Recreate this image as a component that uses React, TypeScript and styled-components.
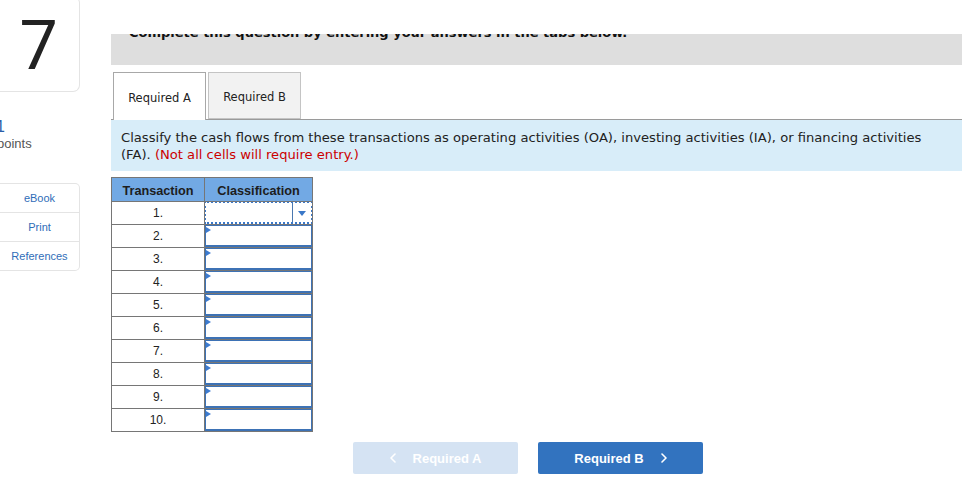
import React from "react";
import styled, { createGlobalStyle } from "styled-components";

const Global = createGlobalStyle`
  html, body { margin: 0; padding: 0; background: #fff; }
  body { font-family: "Liberation Sans", Arial, sans-serif; color: #222; overflow: hidden; }
`;

const Page = styled.div`
  display: flex;
  align-items: flex-start;
  width: 976px;
  height: 490px;
  overflow: hidden;
`;

const Sidebar = styled.aside`
  width: 80px;
  flex-shrink: 0;
  display: flex;
  flex-direction: column;
`;

const NumberCard = styled.div`
  box-sizing: border-box;
  margin-top: -4px;
  height: 96px;
  border: 1px solid #e4e4e4;
  border-left: none;
  border-radius: 0 7px 7px 0;
  display: flex;
  align-items: center;
  justify-content: center;
  font-family: Roboto, "Liberation Sans", sans-serif;
  font-size: 68px;
  font-weight: 400;
  color: #222;
  line-height: 1;
  padding: 4px 2px 0 0;
`;

const Points = styled.div`
  margin-top: 26px;
  margin-left: -4px;
  display: flex;
  flex-direction: column;
`;

const Score = styled.span`
  font-family: "Liberation Sans", Arial, sans-serif;
  font-size: 16px;
  line-height: 18px;
  color: #2a5ea8;
`;

const PointsLabel = styled.span`
  font-size: 13px;
  line-height: 16px;
  color: #555;
  margin-left: 1px;
`;

const Links = styled.nav`
  margin-top: 31px;
  box-sizing: border-box;
  border: 1px solid #e4e4e4;
  border-left: none;
  border-radius: 0 5px 5px 0;
  display: flex;
  flex-direction: column;
`;

const LinkRow = styled.a`
  height: 28px;
  display: flex;
  align-items: center;
  justify-content: center;
  font-size: 11px;
  color: #2f6db8;
  text-decoration: none;
  & + & { border-top: 1px solid #e4e4e4; }
`;

const Main = styled.main`
  margin-left: 31px;
  width: 851px;
  display: flex;
  flex-direction: column;
`;

const Heading = styled.div`
  margin-top: 34px;
  height: 31px;
  background: #dedede;
  overflow: hidden;
`;

const HeadingText = styled.div`
  margin-top: -9px;
  padding-left: 18px;
  font-family: "DejaVu Sans", Verdana, sans-serif;
  font-weight: bold;
  font-size: 13px;
  line-height: 16px;
  color: #111;
  white-space: nowrap;
`;

const Tabs = styled.div`
  margin-top: 7px;
  display: flex;
  gap: 2px;
  padding-left: 2px;
  position: relative;
  z-index: 1;
`;

const Tab = styled.button<{ $active?: boolean }>`
  box-sizing: border-box;
  width: 93px;
  height: ${(p) => (p.$active ? "48px" : "47px")};
  margin-bottom: ${(p) => (p.$active ? "-1px" : "0")};
  border: 1px solid ${(p) => (p.$active ? "#a8a8a8" : "#c4c4c4")};
  border-bottom: ${(p) => (p.$active ? "none" : "1px solid #c4c4c4")};
  background: ${(p) => (p.$active ? "#fff" : "#f2f2f2")};
  font-family: "DejaVu Sans", Verdana, sans-serif;
  font-size: 11.5px;
  color: #222;
  padding: 3px 0 0;
  cursor: pointer;
`;

const Panel = styled.div`
  border-top: 1px solid #9a9a9a;
  background: #d8edf9;
  padding: 9px 10px 8px;
  font-family: "DejaVu Sans", Verdana, sans-serif;
  font-size: 13.12px;
  line-height: 17px;
  color: #222;
`;

const Note = styled.span`
  color: #cc0000;
`;

const Grid = styled.table`
  align-self: flex-start;
  margin-top: 6px;
  border-collapse: collapse;
`;

const HeadCell = styled.th<{ $w: number }>`
  width: ${(p) => p.$w}px;
  height: 21px;
  padding: 2px 0 0;
  border: 1px solid #767676;
  background: #72a9e4;
  font-size: 12.7px;
  font-weight: bold;
  color: #1d1d1d;
  text-align: center;
`;

const NumCell = styled.td`
  height: 22px;
  padding: 0;
  border: 1px solid #767676;
  text-align: center;
  font-size: 12px;
  color: #222;
`;

const InputCell = styled.td`
  height: 22px;
  padding: 0;
  border: 1px solid #767676;
  vertical-align: top;
`;

const Entry = styled.div`
  position: relative;
  box-sizing: border-box;
  height: 22px;
  border: 1px solid #3d72b5;
  border-bottom: 2px solid #3d72b5;
  background: #fff;
`;

const Flag = styled.span`
  position: absolute;
  left: 0px;
  top: 1px;
  width: 0;
  height: 0;
  border-top: 3px solid transparent;
  border-bottom: 3px solid transparent;
  border-left: 5px solid #3d7bd0;
`;

const SelectBox = styled.div`
  box-sizing: border-box;
  height: 23px;
  margin: -1px -1px 0 -1px;
  border: 2px dotted #3a78c8;
  background: #fff;
  display: flex;
  justify-content: flex-end;
`;

const Caret = styled.div`
  width: 18px;
  border-left: 1px solid #4a78b0;
  display: flex;
  align-items: center;
  justify-content: center;
  &::after {
    content: "";
    width: 0;
    height: 0;
    border-left: 4px solid transparent;
    border-right: 4px solid transparent;
    border-top: 5px solid #3a78c8;
    margin-top: 1px;
  }
`;

const Nav = styled.div`
  margin-top: 10px;
  display: flex;
  gap: 20px;
  padding-left: 242px;
`;

const NavButton = styled.button<{ $primary?: boolean }>`
  width: 165px;
  height: 32px;
  border: none;
  border-radius: 2px;
  background: ${(p) => (p.$primary ? "#3273bf" : "#d5e3f3")};
  color: #fff;
  font-family: "Liberation Sans", Arial, sans-serif;
  font-weight: bold;
  font-size: 13px;
  display: flex;
  align-items: center;
  justify-content: center;
  gap: 17px;
  padding: 0;
  cursor: pointer;
`;

const Chevron = ({ dir }: { dir: "left" | "right" }) => (
  <svg width="6" height="10" viewBox="0 0 6 10" fill="none">
    <path
      d={dir === "left" ? "M5 1 L1 5 L5 9" : "M1 1 L5 5 L1 9"}
      stroke="#fff"
      strokeWidth="1.6"
      strokeLinecap="round"
      strokeLinejoin="round"
    />
  </svg>
);

const rows = [1, 2, 3, 4, 5, 6, 7, 8, 9, 10];

export default function App() {
  return (
    <>
      <Global />
      <Page>
        <Sidebar>
          <NumberCard>7</NumberCard>
          <Points>
            <Score>1</Score>
            <PointsLabel>points</PointsLabel>
          </Points>
          <Links>
            <LinkRow href="#">eBook</LinkRow>
            <LinkRow href="#">Print</LinkRow>
            <LinkRow href="#">References</LinkRow>
          </Links>
        </Sidebar>
        <Main>
          <Heading>
            <HeadingText>Complete this question by entering your answers in the tabs below.</HeadingText>
          </Heading>
          <Tabs>
            <Tab $active>Required A</Tab>
            <Tab>Required B</Tab>
          </Tabs>
          <Panel>
            Classify the cash flows from these transactions as operating activities (OA), investing activities (IA), or
            financing activities (FA). <Note>(Not all cells will require entry.)</Note>
          </Panel>
          <Grid>
            <thead>
              <tr>
                <HeadCell $w={92}>Transaction</HeadCell>
                <HeadCell $w={107}>Classification</HeadCell>
              </tr>
            </thead>
            <tbody>
              {rows.map((n) => (
                <tr key={n}>
                  <NumCell>{n}.</NumCell>
                  <InputCell>
                    {n === 1 ? (
                      <SelectBox>
                        <Caret />
                      </SelectBox>
                    ) : (
                      <Entry>
                        <Flag />
                      </Entry>
                    )}
                  </InputCell>
                </tr>
              ))}
            </tbody>
          </Grid>
          <Nav>
            <NavButton disabled>
              <Chevron dir="left" />
              Required A
            </NavButton>
            <NavButton $primary>
              Required B
              <Chevron dir="right" />
            </NavButton>
          </Nav>
        </Main>
      </Page>
    </>
  );
}
